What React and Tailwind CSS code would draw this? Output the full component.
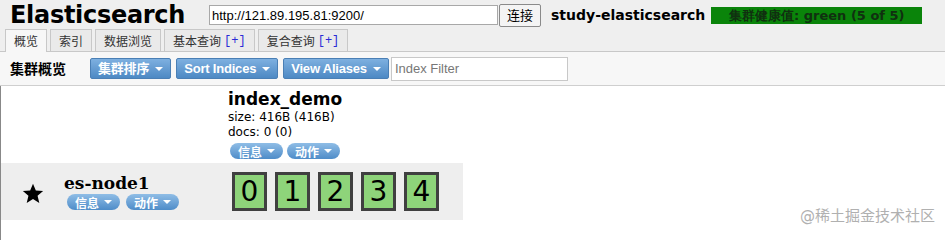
import React from "react";

const cjk = "font-['DejaVu_Sans','Noto_Sans_CJK_SC',sans-serif]";

const Caret = ({ className = "" }) => (
  <span className={`inline-block w-0 h-0 border-x-[4px] border-x-transparent border-t-[4px] border-t-white ${className}`} />
);

const ToolButton = ({ label }) => (
  <button className="flex items-center gap-[6px] h-[21px] px-[7px] rounded-[2px] border border-[#4a7fb5] bg-gradient-to-b from-[#7eb0e0] to-[#4d89c4] text-white text-[13px] font-bold font-['Liberation_Sans','Noto_Sans_CJK_SC',sans-serif] tracking-[-0.2px]">
    {label}
    <Caret />
  </button>
);

const PillButton = ({ label }) => (
  <button className="flex items-center gap-[5px] h-[16px] px-[8px] rounded-full bg-gradient-to-b from-[#8fbde6] to-[#4e8cc8] text-white text-[12px] font-bold leading-none font-['Liberation_Sans','Noto_Sans_CJK_SC',sans-serif]">
    <span className="mt-[3px]">{label}</span>
    <Caret />
  </button>
);

const Tab = ({ label, plus, active }) => (
  <div
    className={`px-[8px] flex items-center border border-b-0 border-[#c8c8c8] text-[12px] text-[#333] font-['Noto_Sans_CJK_SC',sans-serif] ${
      active ? "bg-[#f7f7f7] -mb-px h-[23px]" : "bg-[#eaeaea] h-[22px]"
    }`}
  >
    {label}
    {plus && <span className="ml-[3px] text-[#2b2bd6] font-['Liberation_Mono',monospace]">[+]</span>}
  </div>
);

const Shard = ({ n }) => (
  <div className="w-[35px] h-[39px] border-[3px] border-[#404040] bg-[#8ed47a] flex items-center justify-center text-[28px] leading-none text-black font-['DejaVu_Sans',sans-serif]">
    {n}
  </div>
);

export default function App() {
  return (
    <div className="w-[945px] h-[240px] bg-white relative overflow-hidden font-['DejaVu_Sans',sans-serif]">
      <div className="bg-[#efefef]">
        <div className="flex items-center h-[30px] pl-[10px]">
          <h1 className="text-[24px] font-bold tracking-[-0.3px] text-black w-[199px] leading-none">Elasticsearch</h1>
          <input
            readOnly
            value="http://121.89.195.81:9200/"
            className="w-[289px] h-[20px] border border-[#a8a8a8] bg-white px-[2px] text-[13px] font-['Liberation_Sans',sans-serif] outline-none"
          />
          <button className="ml-[1px] h-[23px] w-[42px] border border-[#8a8a8a] rounded-[2px] bg-[#f4f4f4] text-[13px] font-['Noto_Sans_CJK_SC',sans-serif]">
            连接
          </button>
          <span className="ml-[10px] text-[14px] font-bold text-black">study-elasticsearch</span>
          <span className="ml-[6px] h-[17px] w-[211px] bg-[#0a840a] flex items-center justify-center text-[13px] font-bold text-[#103010] leading-none">
            集群健康值: green (5 of 5)
          </span>
        </div>
        <div className="flex items-end gap-[3px] pl-[5px] h-[22px] border-b border-[#c8c8c8]">
          <Tab label="概览" active />
          <Tab label="索引" />
          <Tab label="数据浏览" />
          <Tab label="基本查询" plus />
          <Tab label="复合查询" plus />
        </div>
        <div className="flex items-center h-[34px] pl-[10px] bg-[#f7f7f7] border-b border-[#cfcfcf]">
          <span className="text-[14px] font-bold font-['Noto_Sans_CJK_SC',sans-serif] w-[80px]">集群概览</span>
          <div className="flex items-center gap-[5px]">
            <ToolButton label="集群排序" />
            <ToolButton label="Sort Indices" />
            <ToolButton label="View Aliases" />
            <input
              readOnly
              placeholder="Index Filter"
              className="w-[177px] h-[24px] border border-[#c8c8c8] bg-white px-[3px] text-[13px] font-['Liberation_Sans',sans-serif] placeholder:text-[#777] outline-none -ml-[3px]"
            />
          </div>
        </div>
      </div>

      <div className="border-l border-[#888] h-full">
        <div className="pl-[227px] pt-[4px] pb-[4px]">
          <div className="text-[17px] font-bold leading-[18px] text-black">index_demo</div>
          <div className="text-[12px] leading-[15px] mt-[2px]">size: 416B (416B)</div>
          <div className="text-[12px] leading-[15px]">docs: 0 (0)</div>
          <div className="flex gap-[4px] mt-[3px] ml-[2px]">
            <PillButton label="信息" />
            <PillButton label="动作" />
          </div>
        </div>

        <div className="w-[462px] h-[57px] bg-[#eeeeee] flex items-center">
          <div className="w-[62px] flex justify-center pt-[4px] pl-[2px]">
            <svg width="22" height="21" viewBox="0 0 24 23">
              <path d="M12 0.8l3.1 7.4 8 .6-6.1 5.2 1.9 7.8L12 17.6l-6.9 4.2 1.9-7.8L.9 8.8l8-.6z" fill="#000" />
            </svg>
          </div>
          <div className="w-[166px] pl-[1px]">
            <div className="text-[17px] font-bold leading-[20px] font-['DejaVu_Serif',serif]">es-node1</div>
            <div className="flex gap-[6px] ml-[3px] mt-[1px]">
              <PillButton label="信息" />
              <PillButton label="动作" />
            </div>
          </div>
          <div className="flex gap-[8px] ml-[3px]">
            {[0, 1, 2, 3, 4].map((n) => (
              <Shard key={n} n={n} />
            ))}
          </div>
        </div>
      </div>

      <div className={`absolute right-[10px] bottom-[13px] text-[15px] text-[#b0b0b0] ${cjk}`}>@稀土掘金技术社区</div>
    </div>
  );
}
